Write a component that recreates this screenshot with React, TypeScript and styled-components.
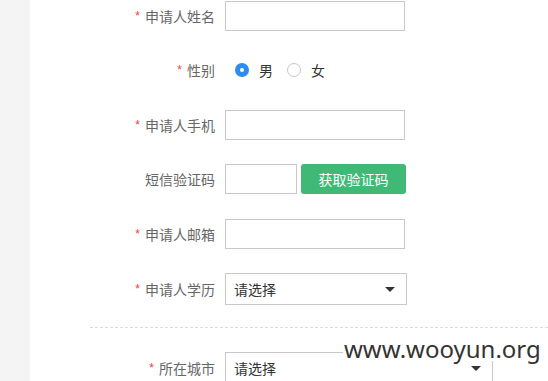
import React, { useState } from 'react';
import styled, { createGlobalStyle } from 'styled-components';

const GlobalStyle = createGlobalStyle`
  html, body {
    margin: 0;
    padding: 0;
    background: #fff;
    overflow: hidden;
  }
  body {
    font-family: "Noto Sans CJK SC", "Noto Sans", sans-serif;
    font-size: 14px;
    color: #333;
  }
`;

const App = () => {
  const [gender, setGender] = useState<'male' | 'female'>('male');

  return (
    <Page>
      <GlobalStyle />
      <Sidebar />
      <Main>
        <Form>
          <Row>
            <Label required>申请人姓名</Label>
            <Input width={180} />
          </Row>
          <Row>
            <Label required>性别</Label>
            <RadioGroup>
              <RadioItem onClick={() => setGender('male')}>
                <RadioDot checked={gender === 'male'} />
                男
              </RadioItem>
              <RadioItem onClick={() => setGender('female')}>
                <RadioDot checked={gender === 'female'} />
                女
              </RadioItem>
            </RadioGroup>
          </Row>
          <Row>
            <Label required>申请人手机</Label>
            <Input width={180} />
          </Row>
          <Row>
            <Label>短信验证码</Label>
            <CodeBox>
              <Input width={72} />
              <SendButton>获取验证码</SendButton>
            </CodeBox>
          </Row>
          <Row>
            <Label required>申请人邮箱</Label>
            <Input width={180} />
          </Row>
          <Row tall>
            <Label required>申请人学历</Label>
            <Select width={182}>
              请选择
              <Caret />
            </Select>
          </Row>
        </Form>
        <Section>
          <Row tall>
            <Label required>所在城市</Label>
            <Select width={268}>
              请选择
              <Caret />
            </Select>
          </Row>
        </Section>
      </Main>
      <Watermark>www.wooyun.org</Watermark>
    </Page>
  );
};

export default App;

const Page = styled.div`
  position: relative;
  display: flex;
  width: 548px;
  height: 381px;
  overflow: hidden;
`;

const Sidebar = styled.div`
  width: 30px;
  flex-shrink: 0;
  background-color: #f4f4f4;
`;

const Main = styled.div`
  flex: 1;
  padding-top: 1px;
`;

const Form = styled.div`
  display: flex;
  flex-direction: column;
  gap: 24.4px;
`;

const Row = styled.div<{ tall?: boolean }>`
  display: flex;
  align-items: center;
  height: ${(p) => (p.tall ? 32 : 30)}px;
  flex-shrink: 0;
`;

const Label = styled.div<{ required?: boolean }>`
  width: 195px;
  height: 30px;
  padding-right: 10px;
  box-sizing: border-box;
  display: flex;
  align-items: center;
  justify-content: flex-end;
  color: #666;
  font-size: 14px;
  line-height: 1;

  &::before {
    content: ${(p) => (p.required ? "'*'" : "''")};
    color: #f03c3c;
    font-size: 12px;
    margin-right: 5px;
    font-family: "Liberation Sans", sans-serif;
  }
`;

const Input = styled.input<{ width: number }>`
  width: ${(p) => p.width}px;
  height: 30px;
  box-sizing: border-box;
  border: 1px solid #c8c8c8;
  border-radius: 0;
  padding: 0 8px;
  margin: 0;
  outline: none;
  font-family: inherit;
  font-size: 14px;
`;

const RadioGroup = styled.div`
  display: flex;
  align-items: center;
  gap: 14px;
  padding-left: 10px;
  color: #333;
`;

const RadioItem = styled.label`
  display: flex;
  align-items: center;
  gap: 10px;
  cursor: pointer;
  line-height: 1;
`;

const RadioDot = styled.span<{ checked: boolean }>`
  width: 14px;
  height: 14px;
  box-sizing: border-box;
  border-radius: 50%;
  border: ${(p) => (p.checked ? '5px solid #2d8cf0' : '1px solid #c5c5c5')};
  background-color: #fff;
`;

const CodeBox = styled.div`
  display: flex;
  align-items: center;
  gap: 4px;
`;

const SendButton = styled.button`
  width: 105px;
  height: 30px;
  border: 0;
  border-radius: 3px;
  background-color: #41b976;
  color: #fff;
  font-family: inherit;
  font-size: 14px;
  line-height: 1;
  cursor: pointer;
  padding: 0;
`;

const Select = styled.div<{ width: number }>`
  position: relative;
  width: ${(p) => p.width}px;
  height: 32px;
  box-sizing: border-box;
  border: 1px solid #c8c8c8;
  padding: 0 8px;
  display: flex;
  align-items: center;
  color: #333;
  font-size: 14px;
  line-height: 1;
`;

const Caret = styled.span`
  position: absolute;
  right: 11px;
  top: 13px;
  width: 0;
  height: 0;
  border-left: 5px solid transparent;
  border-right: 5px solid transparent;
  border-top: 5px solid #333;
`;

const Section = styled.div`
  margin: 22px 0 0 60px;
  padding-top: 24px;
  border-top: 1px dashed #dcdcdc;

  & > ${Row} {
    margin-left: -60px;
  }
`;

const Watermark = styled.div`
  position: absolute;
  left: 343px;
  top: 336px;
  width: 205px;
  height: 25px;
  background-color: #fff;
  color: #333;
  font-family: "Noto Sans", "DejaVu Sans", sans-serif;
  font-size: 24px;
  line-height: 25px;
  padding-left: 1px;
  box-sizing: border-box;
  overflow: visible;
`;
